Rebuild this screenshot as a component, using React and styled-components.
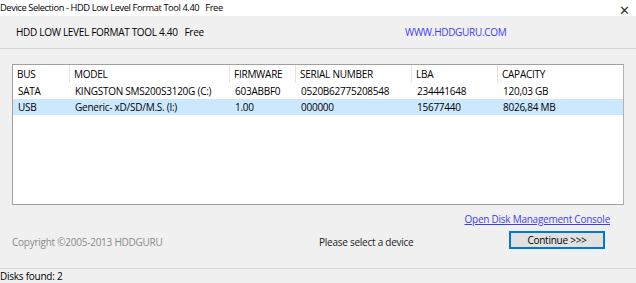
import React from "react";
import styled, { createGlobalStyle } from "styled-components";

const Global = createGlobalStyle`
  html, body { margin: 0; padding: 0; background: #f0f0f0; }
  body {
    font-family: "Open Sans", "Noto Sans", sans-serif;
    font-size: 10px;
    letter-spacing: -0.25px;
    color: #000;
  }
`;

const Window = styled.div`
  width: 636px;
  height: 283px;
  display: flex;
  flex-direction: column;
  background: #f0f0f0;
  overflow: hidden;
`;

const TitleBar = styled.div`
  height: 16px;
  background: #fff;
  display: flex;
  align-items: center;
  justify-content: space-between;
  padding: 0 6px 0 0;
  line-height: 14px;
  font-size: 9.3px;
  letter-spacing: -0.4px;
`;

const Close = styled.span`
  font-size: 13px;
  color: #333;
  line-height: 14px;
  margin-top: 3px;
`;

const Banner = styled.div`
  height: 32px;
  border-bottom: 1px solid #d4d4d4;
  display: flex;
  align-items: center;
  padding-left: 16px;
  letter-spacing: -0.3px;
`;

const BannerTitle = styled.div`
  width: 389px;
  white-space: pre;
`;

const SiteLink = styled.span`
  color: #3d3df0;
`;

const Content = styled.div`
  flex: 1;
  padding: 15px 12px 0 12px;
  display: flex;
  flex-direction: column;
`;

const ListBox = styled.div`
  height: 139px;
  border: 1px solid #a0a0a0;
  background: #fff;
  border-right-color: #b0b0b0;
`;

const cols = "57px 160px 66px 116px 86px 1fr";

const Row = styled.div`
  display: grid;
  grid-template-columns: ${cols};
  height: ${(p) => (p.$header ? 18 : 16)}px;
  align-items: center;
  background: ${(p) => (p.$selected ? "#cce8ff" : "transparent")};
`;

const Cell = styled.div`
  padding-left: ${(p) => (p.$header ? 4 : 5)}px;
  height: 100%;
  display: flex;
  align-items: center;
  white-space: nowrap;
  border-right: ${(p) => (p.$header ? "1px solid #e5e5e5" : "none")};
  &:last-child { border-right: none; }
`;

const LinkRow = styled.div`
  display: flex;
  justify-content: flex-end;
  padding-right: 14px;
  margin-top: 6px;
  height: 16px;
  align-items: center;
`;

const ConsoleLink = styled.a`
  color: #3d3df0;
  text-decoration: underline;
`;

const ActionRow = styled.div`
  display: grid;
  grid-template-columns: 307px 190px 96px;
  align-items: center;
  margin-top: 3px;
  height: 19px;
`;

const Copyright = styled.div`
  color: #8a8a8a;
  margin-top: 5px;
`;

const Prompt = styled.div`
  color: #222;
  margin-top: 5px;
`;

const Button = styled.button`
  width: 96px;
  height: 18px;
  border: 1px solid #0078d7;
  background: #e1e1e1;
  font: inherit;
  letter-spacing: inherit;
  color: #000;
  padding: 0;
  box-shadow: inset 0 0 0 1px #0078d7;
`;

const StatusBar = styled.div`
  height: 14px;
  border-top: 1px solid #d7d7d7;
  display: flex;
  align-items: center;
  line-height: 14px;
  margin-top: auto;
`;

const headers = ["BUS", "MODEL", "FIRMWARE", "SERIAL NUMBER", "LBA", "CAPACITY"];
const rows = [
  ["SATA", "KINGSTON SMS200S3120G (C:)", "603ABBF0", "0520B62775208548", "234441648", "120,03 GB"],
  ["USB", "Generic- xD/SD/M.S. (I:)", "1.00", "000000", "15677440", "8026,84 MB"],
];

export default function App() {
  return (
    <Window>
      <Global />
      <TitleBar>
        <span>Device Selection - HDD Low Level Format Tool 4.40&nbsp;&nbsp;&nbsp;Free</span>
        <Close>✕</Close>
      </TitleBar>
      <Banner>
        <BannerTitle>{"HDD LOW LEVEL FORMAT TOOL 4.40   Free"}</BannerTitle>
        <SiteLink>WWW.HDDGURU.COM</SiteLink>
      </Banner>
      <Content>
        <ListBox>
          <Row $header>
            {headers.map((h) => (
              <Cell $header key={h}>{h}</Cell>
            ))}
          </Row>
          {rows.map((r, i) => (
            <Row key={i} $selected={i === 1}>
              {r.map((c, j) => (
                <Cell key={j}>{c}</Cell>
              ))}
            </Row>
          ))}
        </ListBox>
        <LinkRow>
          <ConsoleLink>Open Disk Management Console</ConsoleLink>
        </LinkRow>
        <ActionRow>
          <Copyright>Copyright ©2005-2013 HDDGURU</Copyright>
          <Prompt>Please select a device</Prompt>
          <Button>Continue &gt;&gt;&gt;</Button>
        </ActionRow>
      </Content>
      <StatusBar>Disks found: 2</StatusBar>
    </Window>
  );
}
